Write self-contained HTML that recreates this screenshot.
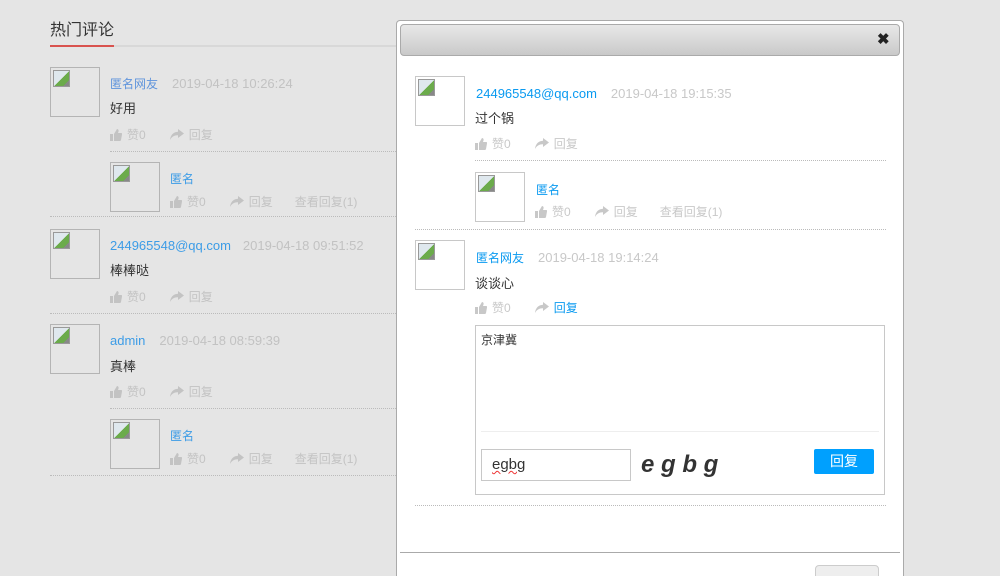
<!DOCTYPE html>
<html style="overflow:hidden;width:1000px;height:576px"><head><meta charset="utf-8"><style>
*{margin:0;padding:0;box-sizing:border-box}
body{width:1000px;height:576px;overflow:hidden;background:#e5e5e5;position:relative;font-family:"Liberation Sans","Noto Sans CJK SC",sans-serif;font-size:12px}
.a{position:absolute;white-space:nowrap;line-height:16px}
.av{position:absolute;width:50px;height:50px;border:1px solid #b4b4b4}
.av:after{content:"";position:absolute;left:2px;top:2px;width:15px;height:15px;border:1px solid #999;background:linear-gradient(135deg,#dfe8ee 50%,#6bab4b 51%,#6bab4b 80%,#888 81%);}
.m .av{border-color:#c8c8c8}
.dl{position:absolute;height:0;border-top:1px dotted #bbb}
.nm{color:#3c9ce6;font-size:12px}
.em{font-size:13px}
.dt{color:#c2c2c2;font-size:13px}
.ct{color:#333;font-size:13px}
.ac{color:#c3c3c3}
.m .nm{color:#0a9af0}
.m .dt{color:#c8c8c8}
.m .ac{color:#c8c8c8}
.ic{display:inline-block;vertical-align:-2px;margin-right:5px}
</style></head><body>
<svg width="0" height="0" style="position:absolute"><defs>
<symbol id="th" viewBox="0 0 12 12"><path d="M0 5h3v7H0zM4 5l3-5c1 0 2 1 1.5 2.5L8 4h3.2c.8 0 1 .8.8 1.5L11 11c-.2.7-.7 1-1.4 1H4z" fill="currentColor"/></symbol>
<symbol id="sh" viewBox="0 0 14 12"><path d="M8 0l6 4.5L8 9V6.3C4.5 6.2 2 7.5 0 11c.5-5 3.5-8 8-8.2z" fill="currentColor"/></symbol>
</defs></svg>

<div class="a" style="left:50px;top:21px;font-size:16px;line-height:20px;color:#333">热门评论</div>
<div style="position:absolute;left:50px;top:45px;width:350px;height:2px;background:#d8d8d8"></div>
<div style="position:absolute;left:50px;top:45px;width:64px;height:2px;background:#d9534f"></div>

<div class="av" style="left:50px;top:67px"></div>
<div class="a" style="left:110px;top:76px"><span class="nm" style="color:#5f94dc">匿名网友</span><span class="dt" style="margin-left:14px">2019-04-18 10:26:24</span></div>
<div class="a ct" style="left:110px;top:101px">好用</div>
<div class="a ac" style="left:110px;top:127px"><svg class="ic" width="12" height="12"><use href="#th"/></svg>赞0<svg class="ic" width="14" height="12" style="margin-left:24px"><use href="#sh"/></svg>回复</div>
<div class="dl" style="left:110px;top:151px;width:290px"></div>
<div class="av" style="left:110px;top:162px"></div>
<div class="a nm" style="left:170px;top:171px">匿名</div>
<div class="a ac" style="left:170px;top:194px"><svg class="ic" width="12" height="12"><use href="#th"/></svg>赞0<svg class="ic" width="14" height="12" style="margin-left:24px"><use href="#sh"/></svg>回复<span style="margin-left:22px">查看回复(1)</span></div>
<div class="dl" style="left:50px;top:216px;width:350px"></div>

<div class="av" style="left:50px;top:229px"></div>
<div class="a" style="left:110px;top:238px"><span class="nm em">244965548@qq.com</span><span class="dt" style="margin-left:12px">2019-04-18 09:51:52</span></div>
<div class="a ct" style="left:110px;top:263px">棒棒哒</div>
<div class="a ac" style="left:110px;top:289px"><svg class="ic" width="12" height="12"><use href="#th"/></svg>赞0<svg class="ic" width="14" height="12" style="margin-left:24px"><use href="#sh"/></svg>回复</div>
<div class="dl" style="left:50px;top:313px;width:350px"></div>

<div class="av" style="left:50px;top:324px"></div>
<div class="a" style="left:110px;top:333px"><span class="nm em">admin</span><span class="dt" style="margin-left:14px">2019-04-18 08:59:39</span></div>
<div class="a ct" style="left:110px;top:359px">真棒</div>
<div class="a ac" style="left:110px;top:384px"><svg class="ic" width="12" height="12"><use href="#th"/></svg>赞0<svg class="ic" width="14" height="12" style="margin-left:24px"><use href="#sh"/></svg>回复</div>
<div class="dl" style="left:110px;top:408px;width:290px"></div>
<div class="av" style="left:110px;top:419px"></div>
<div class="a nm" style="left:170px;top:428px">匿名</div>
<div class="a ac" style="left:170px;top:451px"><svg class="ic" width="12" height="12"><use href="#th"/></svg>赞0<svg class="ic" width="14" height="12" style="margin-left:24px"><use href="#sh"/></svg>回复<span style="margin-left:22px">查看回复(1)</span></div>
<div class="dl" style="left:50px;top:475px;width:350px"></div>

<div class="m" style="position:absolute;left:396px;top:20px;width:508px;height:556px;background:#fff;border:1px solid #aaa;border-bottom:none;border-radius:4px 4px 0 0">
  <div style="position:absolute;left:3px;top:3px;width:500px;height:32px;border:1px solid #aaa;border-radius:4px;background:linear-gradient(#e8e8e8,#c9c9c9)"></div>
  <div class="a" style="left:480px;top:11px;font-size:15px;font-weight:bold;color:#222">✖</div>
</div>
<div class="m">
<div class="av" style="left:415px;top:76px"></div>
<div class="a" style="left:476px;top:86px;font-size:13px"><span class="nm em">244965548@qq.com</span><span class="dt" style="margin-left:14px">2019-04-18 19:15:35</span></div>
<div class="a ct" style="left:475px;top:111px">过个锅</div>
<div class="a ac" style="left:475px;top:136px"><svg class="ic" width="12" height="12"><use href="#th"/></svg>赞0<svg class="ic" width="14" height="12" style="margin-left:24px"><use href="#sh"/></svg>回复</div>
<div class="dl" style="left:475px;top:160px;width:411px"></div>
<div class="av" style="left:475px;top:172px"></div>
<div class="a nm" style="left:536px;top:182px">匿名</div>
<div class="a ac" style="left:535px;top:204px"><svg class="ic" width="12" height="12"><use href="#th"/></svg>赞0<svg class="ic" width="14" height="12" style="margin-left:24px"><use href="#sh"/></svg>回复<span style="margin-left:22px">查看回复(1)</span></div>
<div class="dl" style="left:415px;top:229px;width:471px"></div>

<div class="av" style="left:415px;top:240px"></div>
<div class="a" style="left:476px;top:250px"><span class="nm">匿名网友</span><span class="dt" style="margin-left:14px">2019-04-18 19:14:24</span></div>
<div class="a ct" style="left:475px;top:276px">谈谈心</div>
<div class="a ac" style="left:475px;top:300px"><svg class="ic" width="12" height="12"><use href="#th"/></svg>赞0<svg class="ic" width="14" height="12" style="margin-left:24px"><use href="#sh"/></svg><span style="color:#0a9af0">回复</span></div>
<div style="position:absolute;left:475px;top:325px;width:410px;height:170px;border:1px solid #c8c8c8"></div>
<div class="a" style="left:481px;top:332px;color:#333">京津冀</div>
<div style="position:absolute;left:481px;top:431px;width:398px;height:1px;background:#eee"></div>
<div style="position:absolute;left:481px;top:449px;width:150px;height:32px;border:1px solid #c8c8c8"></div>
<div class="a" style="left:492px;top:455px;font-size:15px;line-height:20px;color:#333;text-decoration:underline wavy #e33;text-decoration-thickness:1px">egbg</div>
<div class="a" style="left:641px;top:452px;font-size:24px;line-height:26px;font-weight:bold;font-style:italic;color:#333;letter-spacing:0px">e g b g</div>
<div style="position:absolute;left:814px;top:449px;width:60px;height:25px;background:#00a0fe;border-radius:2px;color:#fff;font-size:14px;line-height:25px;text-align:center">回复</div>
<div class="dl" style="left:415px;top:505px;width:471px"></div>
<div style="position:absolute;left:400px;top:552px;width:500px;height:1px;background:#aaa"></div>
<div style="position:absolute;left:815px;top:565px;width:64px;height:20px;border:1px solid #ccc;border-radius:4px;background:#eee"></div>
</div>
</body></html>
